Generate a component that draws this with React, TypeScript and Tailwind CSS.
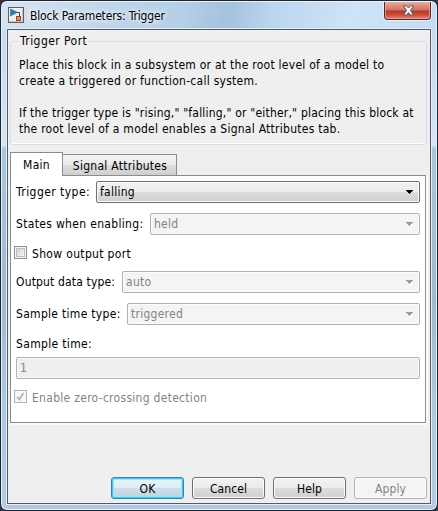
import type { ReactNode } from "react";

function Caret({ disabled }: { disabled?: boolean }) {
  return (
    <svg width="8" height="5" viewBox="0 0 8 5" shapeRendering="crispEdges" className="shrink-0">
      {disabled && <path d="M2 2h6v1h-1v1h-1v1h-2v-1h-1v-1h-1z" fill="#fff" />}
      <path d="M0 0h7v1h-1v1h-1v1h-1v1h-1v-1h-1v-1h-1v-1h-1z" fill={disabled ? "#9b9b9b" : "#000"} />
    </svg>
  );
}

function Combo({ value, disabled }: { value: string; disabled?: boolean }) {
  return (
    <div
      className={
        "flex h-[22px] flex-1 items-center justify-between rounded-[2px] border pl-[3px] pr-[5px] " +
        (disabled
          ? "border-[#adb2b5] bg-[#f4f4f4] text-[#838383] shadow-[inset_0_0_0_1px_#fcfcfc]"
          : "border-[#707070] bg-[linear-gradient(#f2f2f2_0%,#ebebeb_48%,#dddddd_50%,#cfcfcf_100%)] shadow-[inset_0_0_0_1px_#fafafa]")
      }
    >
      <span>{value}</span>
      <Caret disabled={disabled} />
    </div>
  );
}

function Row({ label, labelClass, children }: { label: string; labelClass: string; children: ReactNode }) {
  return (
    <div className="flex h-[22px] items-center pl-[5px] pr-[5px]">
      <span className={labelClass}>{label}</span>
      {children}
    </div>
  );
}

function Check({ checked }: { checked?: boolean }) {
  return (
    <span
      className={
        "flex h-[13px] w-[13px] shrink-0 items-center justify-center border p-px " +
        (checked ? "border-[#b1b1b1] bg-[#f8f8f8]" : "border-[#8e8f8f] bg-[#f4f4f4]")
      }
    >
      {checked ? (
        <svg width="9" height="9" viewBox="0 0 9 9">
          <path d="M1.2 4.8 3.4 7.5 7.4 1" fill="none" stroke="#b5b8bd" strokeWidth="1.9" />
        </svg>
      ) : (
        <span className="h-[9px] w-[9px] border border-[#b9bec4] bg-[linear-gradient(135deg,#cfd2d5,#f6f6f6)]" />
      )}
    </span>
  );
}

function PushButton({ label, kind = "normal" }: { label: string; kind?: "normal" | "default" | "disabled" }) {
  const looks = {
    normal: "border-[#707070] bg-[linear-gradient(#f2f2f2_0%,#ebebeb_48%,#dddddd_50%,#cfcfcf_100%)] shadow-[inset_0_0_0_1px_#fafafa]",
    default: "border-[#3c7fb1] bg-[linear-gradient(#eaf4f9_0%,#e0edf4_48%,#cbdfea_50%,#bdd5e3_100%)] shadow-[inset_0_0_0_1px_#35cdfa,inset_0_0_0_2px_#9ce5fb]",
    disabled: "border-[#adb2b5] bg-[#f4f4f4] text-[#838383] shadow-[inset_0_0_0_1px_#fcfcfc]",
  };
  return (
    <button className={"flex h-[22px] w-[73px] items-center justify-center rounded-[3px] border pt-[2px] tracking-[0.1px] " + looks[kind]}>
      {label}
    </button>
  );
}

export default function App() {
  return (
    <div className="h-[511px] w-[438px] overflow-hidden bg-[#35343b] font-['DejaVu_Sans_Condensed','DejaVu_Sans',sans-serif] text-[12px] leading-[16px] tracking-[0.26px] text-black [font-stretch:condensed]">
      <div className="flex h-[511px] w-[438px] flex-col rounded-[7px] border border-[#1c2431] bg-[linear-gradient(180deg,#c3daf0_0px,#c9dff4_85px,#d5e5f4_145px,#a9c6e1_147px,#9eb9d2_300px,#abc8e3_400px,#b2cbe2_511px)] pb-[6px] pl-[5px] pr-[6px] shadow-[inset_0_0_0_1px_#e9f3fb]">
        {/* Title bar */}
        <div className="-ml-[4px] -mr-[5px] mt-px flex h-[27px] shrink-0 items-start rounded-t-[6px] bg-[linear-gradient(100deg,#d5e4f1_0%,#bfd5e9_25%,#b4cfe7_42%,#a5c2dc_52%,#bbd5ee_62%,#cfe3f7_80%,#c3dcf4_100%)] pl-[6px] pr-[5px]">
          <svg width="16" height="16" viewBox="0 0 16 16" className="mt-[5px] shrink-0">
            <rect x="0.5" y="0.5" width="15" height="15" fill="#f1eeec" stroke="#625f5e" />
            <path d="M1.5 14.5h13v-13" fill="none" stroke="#c4c1bf" />
            <path d="M2.5 2 9.5 5.3 2.5 9z" fill="#277cb7" stroke="#17659e" strokeWidth=".5" />
            <path d="M9 5.5h2.5V9" fill="none" stroke="#444" />
            <rect x="8.5" y="9.5" width="4" height="4" fill="#e58a55" stroke="#9c4317" />
          </svg>
          <span className="ml-[6px] mt-[6px] whitespace-nowrap tracking-[-0.15px] [text-shadow:0_0_7px_#fff,0_0_5px_#fff]">Block Parameters: Trigger</span>
          <div className="ml-auto flex h-[18px] w-[47px] items-center justify-center rounded-b-[4px] border border-t-0 border-[#5b2329] bg-[linear-gradient(#e6aa9d_0%,#d5705f_48%,#b53526_52%,#c94b36_75%,#e08c73_100%)] pl-[2px] shadow-[inset_0_0_0_1px_#f0b5a8a0,0_0_0_1px_#e6f1fa]">
            <svg width="13" height="11" viewBox="0 0 13 11">
              <path d="M1.5 .8h3l2 2.3 2-2.3h3L8.4 5.4 11.5 10h-3l-2-2.4-2 2.4h-3l3.1-4.6z" fill="#fff" stroke="#555b6a" strokeWidth="1" />
            </svg>
          </div>
        </div>

        {/* Client area */}
        <div className="ml-px flex flex-1 flex-col border border-[#4e5d68] bg-[#efefef] pl-[2px] pr-[3px] shadow-[0_0_0_1px_#e3eef8]">
          <fieldset className="mt-[3px] h-[112px] shrink-0 rounded-[3px] border border-[#d5dfe5] px-[8px] shadow-[inset_0_-1px_0_#fff]">
            <legend className="-ml-px px-[2px] tracking-[0.45px]">Trigger Port</legend>
            <div className="mt-[8px] whitespace-nowrap">
              <p>Place this block in a subsystem or at the root level of a model to</p>
              <p>create a triggered or function-call system.</p>
              <p className="mt-4 tracking-[0.2px]">If the trigger type is "rising," "falling," or "either," placing this block at</p>
              <p>the root level of a model enables a Signal Attributes tab.</p>
            </div>
          </fieldset>

          {/* Tabs */}
          <div className="mt-[7px] flex h-[23px] shrink-0 items-end">
            <div className="z-10 -mb-px flex h-[24px] w-[53px] items-center justify-center border border-b-0 border-[#898c95] bg-white">Main</div>
            <div className="-mb-px flex h-[22px] w-[114px] items-center justify-center border border-l-0 border-[#898c95] bg-[linear-gradient(#f2f2f2_0%,#ebebeb_48%,#dddddd_50%,#cfcfcf_100%)] pl-px pt-px">Signal Attributes</div>
          </div>

          <div className="mr-px flex h-[248px] shrink-0 flex-col border border-[#898c95] bg-white pt-[5px] shadow-[1px_1px_0_1px_#f9f9f9]">
            <Row label="Trigger type:" labelClass="w-[80px] tracking-[0.45px]"><Combo value="falling" /></Row>
            <div className="h-[10px]" />
            <Row label="States when enabling:" labelClass="w-[134px] whitespace-nowrap tracking-[0.33px]"><Combo value="held" disabled /></Row>
            <div className="mt-[11px] flex h-[13px] items-center pl-[3px]"><Check /><span className="ml-[5px] pt-[2px] tracking-[0.33px]">Show output port</span></div>
            <div className="h-[12px]" />
            <Row label="Output data type:" labelClass="w-[106px] whitespace-nowrap tracking-[0.16px]"><Combo value="auto" disabled /></Row>
            <div className="h-[10px]" />
            <Row label="Sample time type:" labelClass="w-[111px] whitespace-nowrap tracking-[0.3px]"><Combo value="triggered" disabled /></Row>
            <div className="mt-[11px] pl-[5px] tracking-[0.34px]">Sample time:</div>
            <div className="mx-[5px] mt-[5px] flex h-[22px] items-center rounded-[2px] border border-[#adb2b5] bg-[#efefef] pl-[3px] text-[#838383] shadow-[inset_0_0_0_1px_#fafafa]">1</div>
            <div className="mt-[11px] flex h-[13px] items-center pl-[3px] text-[#838383]"><Check checked /><span className="ml-[5px] pt-[2px] tracking-[0.29px]">Enable zero-crossing detection</span></div>
          </div>

          <div className="mb-[4px] mt-auto flex justify-end gap-[8px]">
            <PushButton label="OK" kind="default" />
            <PushButton label="Cancel" />
            <PushButton label="Help" />
            <PushButton label="Apply" kind="disabled" />
          </div>
        </div>
      </div>
    </div>
  );
}
